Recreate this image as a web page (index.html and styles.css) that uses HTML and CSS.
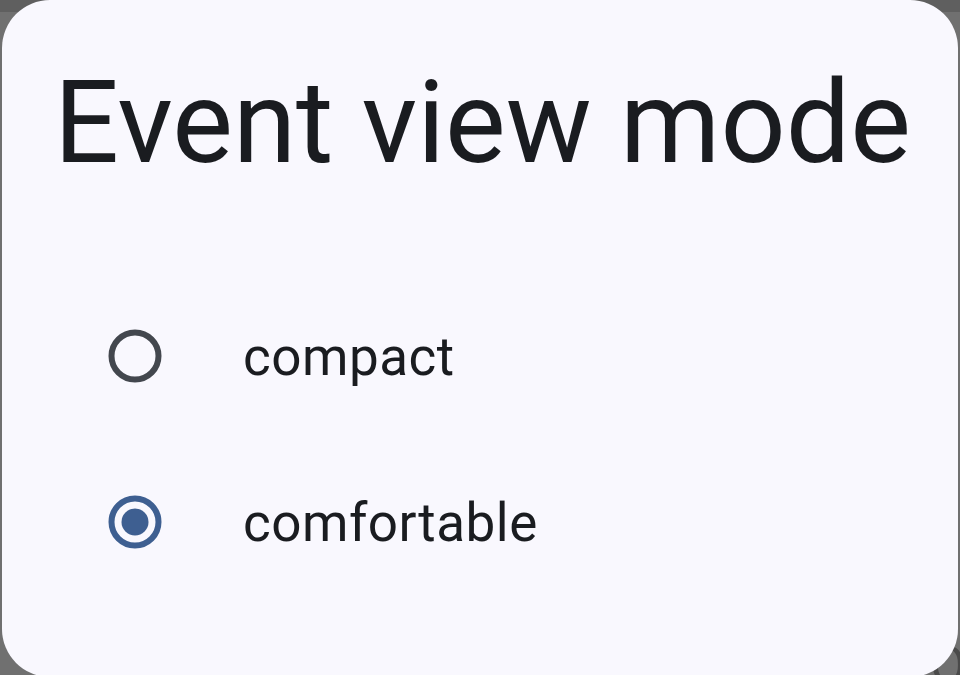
FILE: index.html
```html
<!DOCTYPE html>
<html lang="en">
<head>
<meta charset="utf-8">
<link rel="stylesheet" href="styles.css">
<title>Event view mode</title>
</head>
<body>
<div class="backdrop-text">Or</div>
<div class="dialog">
  <h1 class="title">Event view mode</h1>
  <div class="options">
    <div class="option">
      <svg class="radio" width="54" height="54" viewBox="0 0 54 54"><circle cx="27" cy="27" r="23.5" fill="none" stroke="#43474e" stroke-width="6"/></svg>
      <span class="label">compact</span>
    </div>
    <div class="option">
      <svg class="radio" width="54" height="54" viewBox="0 0 54 54"><circle cx="27" cy="27" r="23.5" fill="none" stroke="#3e5f91" stroke-width="6"/><circle cx="27" cy="27" r="13.5" fill="#3e5f91"/></svg>
      <span class="label">comfortable</span>
    </div>
  </div>
</div>
</body>
</html>
```
FILE: styles.css
```css
html, body {
  margin: 0;
  padding: 0;
  height: 675px;
  overflow: hidden;
}
body {
  background: linear-gradient(#5f5f5f 0, #5f5f5f 12px, #707070 12px, #707070 100%);
  font-family: Roboto, "Noto Sans", sans-serif;
  position: relative;
}
.backdrop-text {
  position: absolute;
  left: 930px;
  top: 636px;
  font-size: 52px;
  color: #4a4a4a;
  line-height: 60px;
}
.dialog {
  position: relative;
  margin: 0 2px;
  height: 677px;
  background: #f9f8fe;
  border-radius: 48px;
  padding-top: 56px;
  box-sizing: border-box;
}
.title {
  margin: 0;
  padding-left: 52px;
  font-weight: 400;
  font-size: 114.4px;
  line-height: 134px;
  color: #1a1c20;
  letter-spacing: 0;
}
.options {
  margin-top: 83px;
}
.option {
  height: 166px;
  display: flex;
  align-items: center;
  padding-left: 106px;
}
.radio {
  flex: none;
  display: block;
}
.label {
  margin-left: 81px;
  font-size: 53px;
  line-height: 60px;
  letter-spacing: 0.5px;
  color: #1a1c20;
  padding-top: 2px;
}
```
